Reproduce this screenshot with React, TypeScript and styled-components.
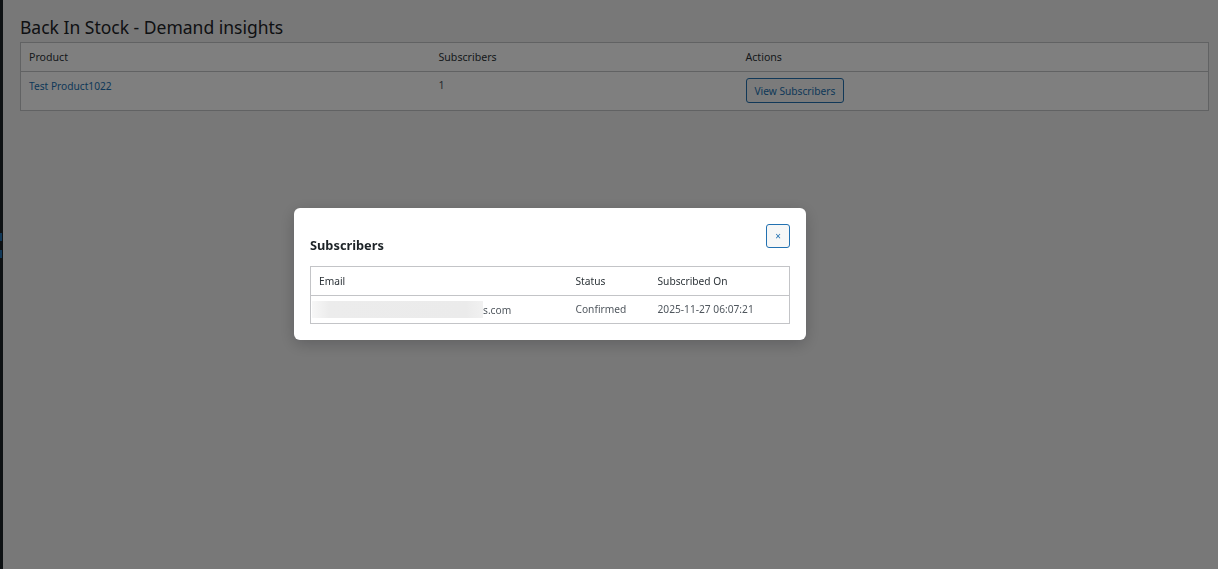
import React from 'react';
import styled, {createGlobalStyle} from 'styled-components';

const GlobalStyle = createGlobalStyle`
    html, body {
        margin: 0;
        padding: 0;
        height: 100%;
        background: #f0f0f1;
    }

    body {
        font-family: "Noto Sans", "Open Sans", sans-serif;
        color: #1d2327;
    }

    #root {
        height: 100%;
    }
`

const products = [
    {id: 1022, name: 'Test Product1022', count: 1},
]

const subscribers = [
    {id: 1, email: 's.com', status: 'Confirmed', date: '2025-11-27 06:07:21'},
]

const App = () => {
    return (
        <>
            <GlobalStyle/>
            <Layout>
                <AdminMenu>
                    <MenuMark/>
                    <MenuMark/>
                </AdminMenu>

                <Content>
                    <Title>Back In Stock - Demand insights</Title>

                    <ListTable>
                        <thead>
                        <tr>
                            <HeadCell $width={410}>Product</HeadCell>
                            <HeadCell $width={307}>Subscribers</HeadCell>
                            <HeadCell>Actions</HeadCell>
                        </tr>
                        </thead>
                        <tbody>
                        {products.map(p => (
                            <tr key={p.id}>
                                <BodyCell><ProductLink href="#">{p.name}</ProductLink></BodyCell>
                                <BodyCell>{p.count}</BodyCell>
                                <BodyCell><SecondaryButton>View Subscribers</SecondaryButton></BodyCell>
                            </tr>
                        ))}
                        </tbody>
                    </ListTable>
                </Content>
            </Layout>

            <Overlay>
                <Modal>
                    <ModalHeader>
                        <ModalTitle>Subscribers</ModalTitle>
                        <CloseButton aria-label="Close">×</CloseButton>
                    </ModalHeader>

                    <ModalTable>
                        <thead>
                        <tr>
                            <ModalHeadCell $width={257}>Email</ModalHeadCell>
                            <ModalHeadCell $width={82}>Status</ModalHeadCell>
                            <ModalHeadCell>Subscribed On</ModalHeadCell>
                        </tr>
                        </thead>
                        <tbody>
                        {subscribers.map(s => (
                            <tr key={s.id}>
                                <ModalCell $flush>
                                    <Redacted/>
                                    <span>{s.email}</span>
                                </ModalCell>
                                <ModalCell>{s.status}</ModalCell>
                                <ModalCell>{s.date}</ModalCell>
                            </tr>
                        ))}
                        </tbody>
                    </ModalTable>
                </Modal>
            </Overlay>
        </>
    );
};

export default App;


const Layout = styled.div`
    display: flex;
    min-height: 100%;
`

const AdminMenu = styled.aside`
    width: 3px;
    flex-shrink: 0;
    background: #1d2327;
    display: flex;
    flex-direction: column;
    gap: 9px;
    padding-top: 233px;
`

const MenuMark = styled.div`
    width: 2px;
    height: 8px;
    background: #2271b1;
`

const Content = styled.main`
    flex: 1;
    padding: 14px 9px 0 17px;
`

const Title = styled.h1`
    margin: 0 0 2px;
    font-size: 17.5px;
    font-weight: 400;
    line-height: 26px;
    color: #1d2327;
`

const ListTable = styled.table`
    width: 100%;
    table-layout: fixed;
    border-collapse: collapse;
    background: #fff;
    border: 1px solid #c3c4c7;
    font-size: 10.6px;
`

const HeadCell = styled.th<{ $width?: number }>`
    box-sizing: border-box;
    width: ${p => p.$width ? `${p.$width}px` : 'auto'};
    height: 29px;
    padding: 0 9px 1px 8px;
    text-align: left;
    font-weight: 400;
    color: #2c3338;
    border-bottom: 1px solid #c3c4c7;
`

const BodyCell = styled.td`
    padding: 6px 9px 7px 8px;
    vertical-align: top;
    color: #50575e;
    line-height: 15px;
`

const ProductLink = styled.a`
    display: inline-block;
    margin-top: 1px;
    font-size: 10.2px;
    color: #2271b1;
    text-decoration: none;
`

const SecondaryButton = styled.button`
    display: block;
    height: 25px;
    padding: 0 8px;
    border: 1px solid #2271b1;
    border-radius: 3px;
    background: #f6f7f7;
    color: #2271b1;
    font-family: inherit;
    font-size: 10.2px;
`

const Overlay = styled.div`
    position: fixed;
    inset: 0;
    background: rgba(0, 0, 0, 0.5);
    display: flex;
    align-items: flex-start;
    justify-content: flex-start;
    padding: 208px 0 0 294px;
`

const Modal = styled.section`
    width: 512px;
    box-sizing: border-box;
    padding: 16px;
    background: #fff;
    border-radius: 6px;
    box-shadow: 0 4px 16px rgba(0, 0, 0, 0.2);
`

const ModalHeader = styled.header`
    display: flex;
    align-items: flex-start;
    justify-content: space-between;
    margin-bottom: 13px;
`

const ModalTitle = styled.h2`
    margin: 13px 0 0;
    font-size: 12.8px;
    font-weight: 700;
    line-height: 16px;
    color: #1d2327;
`

const CloseButton = styled.button`
    width: 24px;
    height: 24px;
    padding: 0;
    border: 1px solid #2271b1;
    border-radius: 3px;
    background: #f6f7f7;
    color: #2271b1;
    font-size: 10px;
    line-height: 1;
    font-family: inherit;
`

const ModalTable = styled.table`
    width: 100%;
    table-layout: fixed;
    border-collapse: collapse;
    border: 1px solid #c3c4c7;
    font-size: 10.2px;
`

const ModalHeadCell = styled.th<{ $width?: number }>`
    box-sizing: border-box;
    width: ${p => p.$width ? `${p.$width}px` : 'auto'};
    height: 29px;
    padding: 0 8px 1px;
    text-align: left;
    font-weight: 400;
    color: #2c3338;
    border-bottom: 1px solid #c3c4c7;
`

const ModalCell = styled.td<{ $flush?: boolean }>`
    box-sizing: border-box;
    height: 28px;
    padding: ${p => p.$flush ? '0 8px 1px 1px' : '0 8px 1px'};
    color: #50575e;
    white-space: nowrap;

    & > span {
        vertical-align: middle;
    }
`

const Redacted = styled.span`
    display: inline-block;
    width: 171px;
    height: 17px;
    vertical-align: middle;
    background: linear-gradient(90deg, #f7f7f7 0%, #ececec 10%, #ebebeb 90%, #f1f1f1 100%);
`
